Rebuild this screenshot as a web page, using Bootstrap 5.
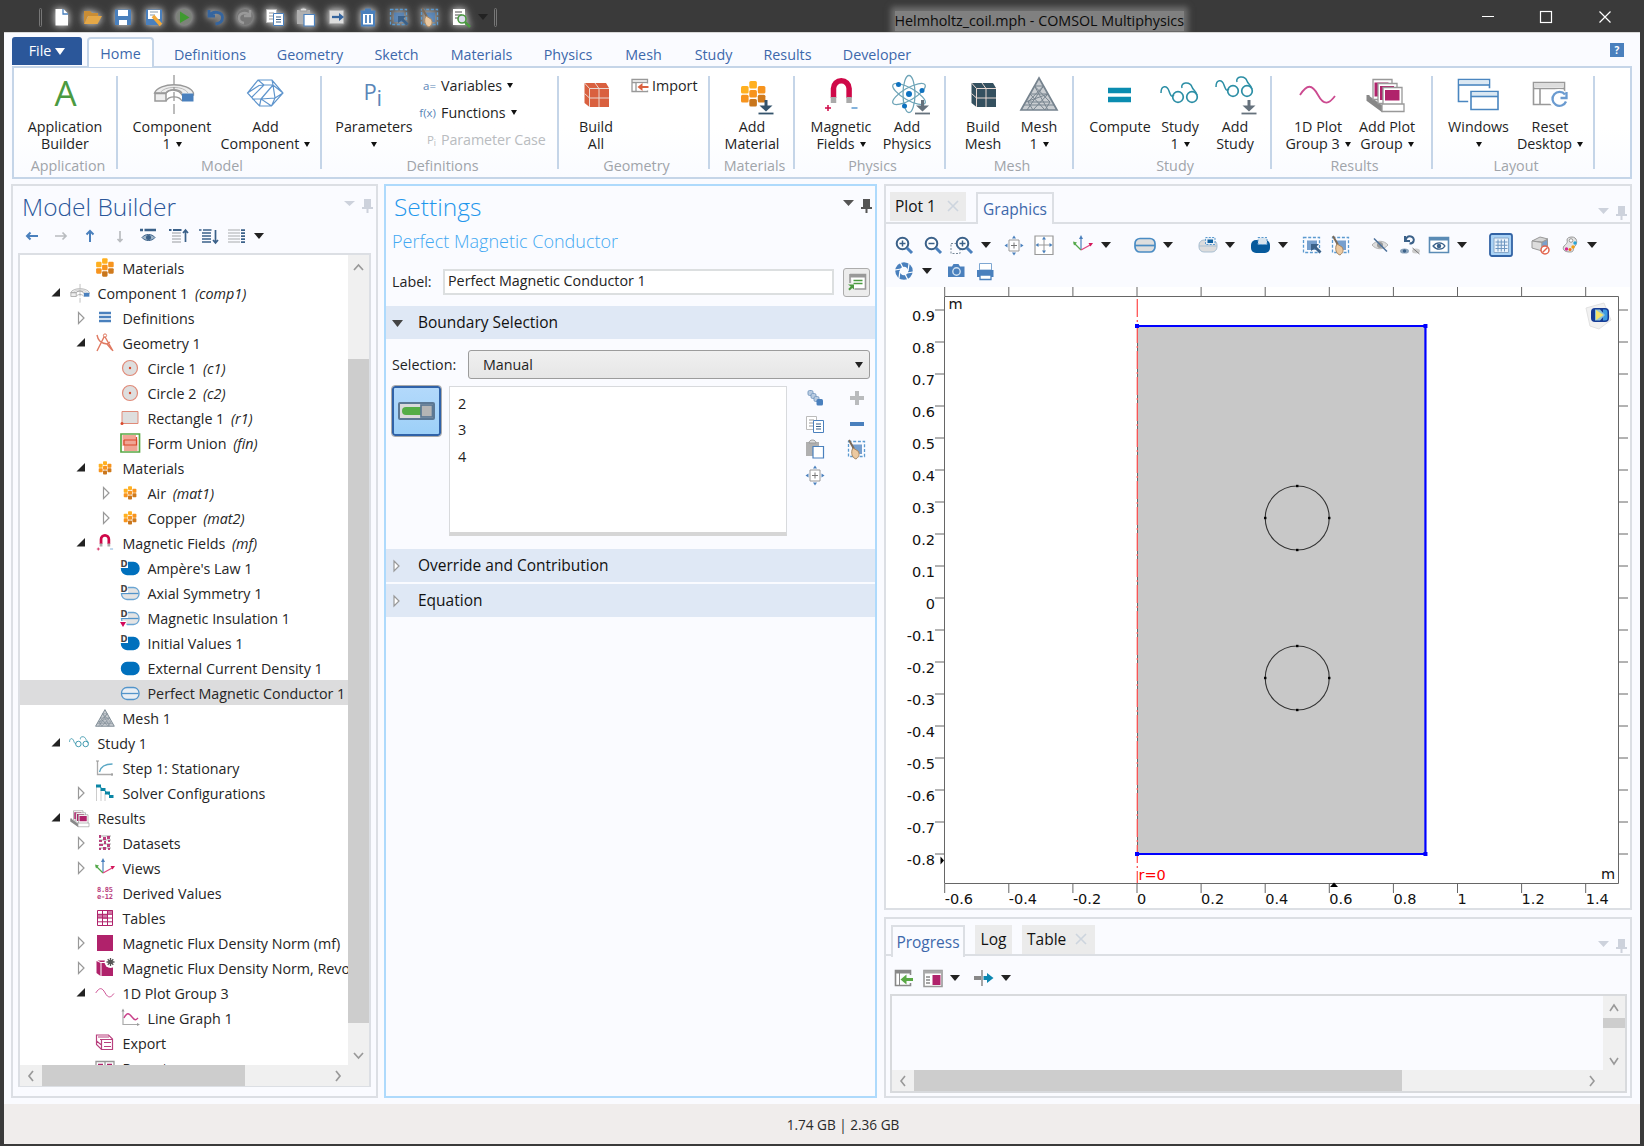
<!DOCTYPE html>
<html lang="en">
<head>
<meta charset="utf-8">
<title>Helmholtz_coil.mph - COMSOL Multiphysics</title>
<link rel="stylesheet" href="https://cdn.jsdelivr.net/npm/bootstrap@5.3.0/dist/css/bootstrap.min.css">
<style>
:root{--ui:"Open Sans","Noto Sans",sans-serif;--edge:#dcdfe4;--pane:#fafbff}
body{width:1644px;height:1146px;overflow:hidden;background:#3a3a3a;font-family:var(--ui);font-size:14.3px;line-height:1.2;color:#1f1f1f}
svg{display:block;flex:none;overflow:visible}
.titlebar{height:32px;overflow:hidden}
.glow{filter:drop-shadow(0 0 3px rgba(255,255,255,.6)) drop-shadow(0 0 5px rgba(255,255,255,.4))}
.tb-sep{width:3px;height:19px;border:1px solid #777;border-radius:2px}
.doc-title{margin-left:398px;color:#0c0c0c;background:#808080;box-shadow:0 0 6px 4px #707070;height:20px;line-height:20px;margin-top:11px}
.shell{margin:0 4px 2px;width:1636px;height:1112px;background:var(--pane);border-top:1px solid #d8d8d8}
.tabs{height:33px;padding-left:8px}
.file-tab{width:70px;height:28px;margin-top:4px;background:#2b579a;color:#fff;border-radius:3px 3px 0 0}
.tab{color:#3d68ab}
.home-tab{width:67px;height:30px;margin:4px 0 0 5px;border:2px solid #c5d5e8;border-bottom:0;border-radius:4px 4px 0 0;background:#fff;position:relative;z-index:2;margin-bottom:-2px;color:#3d68ab;padding-top:6px;text-align:center}
.tabset{padding-top:13px}
.help{width:14px;height:14px;background:#4a80bd;color:#fff;font-size:10px;font-weight:700;margin:10px 16px 0 0}
.ribbon{height:113px;margin:0 8px;border:2px solid #c5d5e8;background:linear-gradient(#fff 55%,#fafbff)}
.rgroup{position:relative;height:109px}
.rgroup::after{content:"";position:absolute;right:0;top:8px;height:93px;width:2px;background:#c5d5e8}
.rname{position:absolute;left:4px;right:0;bottom:3px;text-align:center;color:#a0a4aa}
.rbtn{flex:none;text-align:center;line-height:16.6px;white-space:nowrap;padding-top:5px}
.rbtn svg{margin:0 auto;height:44px;margin-bottom:2px}
.caret{display:inline-block;border:3px solid transparent;border-top:5px solid #111;border-bottom:0;vertical-align:2px;margin-left:5px}
.caret.lone{margin-left:0}
.bigcaret{display:block;border:5px solid transparent;border-top:6px solid #222;border-bottom:0;width:0;height:0;flex:none}
.rsmall{height:27px}
.rsmall i{font-style:normal;color:#5b86b8;font-size:11.5px;text-align:right;width:19px;margin-right:5px}
.rsmall.off,.rsmall.off i{color:#b9bcc0}
.work{padding:5px 8px 0 7px;gap:6px;height:919px}
.pane{border:2px solid var(--edge);background:var(--pane)}
.ptitle{font-weight:300;font-size:24.5px;line-height:30px;color:#2b579a}
.tree-box{width:353px;height:834px;border:2px solid var(--edge);margin-left:5px;background:#fff}
.tree{width:328px;height:810px;overflow:hidden}
.trow{height:25px;white-space:nowrap}
.trow span{padding-top:2px;margin-left:8px;color:#252525}
.trow em{margin-left:3px}
.trow.sel{background:#dcdcdd}
.sbar{background:#f0f0f0}
.thumb{background:#cdcdcd}
.section{height:33px;background:#dfe8f5;font-size:15.5px;color:#111;padding-left:7px}
.fld{height:26px;border:2px solid #dcdfe0;background:#fff;padding-left:3px;line-height:20px;color:#222}
.gbtn{width:27px;height:29px;border:1.5px solid #adadad;border-radius:3px;background:#ececec}
.combo{width:402px;height:29px;border:1.5px solid #9c9c9c;border-radius:3px;background:linear-gradient(#f0f0f0,#e6e6e6);padding:0 6px 0 14px}
.toggle{width:49px;height:50px;border:2px solid #2f62a8;outline:1px solid #aaa;border-radius:3px;background:linear-gradient(#b3d9fb,#9dd0f8)}
.slist{width:338px;height:150px;border:1.5px solid #d8dadd;border-bottom:4px solid #d6d6d6;background:#fff;padding:4px 8px;line-height:26.3px;font-size:14.5px}
.wtab{height:29px;background:#ebebeb;font-size:15.5px;color:#111}
.wtab.on{height:32px;background:var(--pane);border:2px solid var(--edge);border-bottom:0;color:#3d68ab;margin-bottom:-2px;position:relative;z-index:1;padding-top:1px}
.strip{border-bottom:2px solid var(--edge)}
.status{height:40px;background:#f0edec;color:#2a2a2a;font-size:13.6px;padding:2px 0 0 42px}
.axis{font-family:"DejaVu Sans",sans-serif;font-size:14.5px}
</style>
<script src="https://cdn.jsdelivr.net/npm/bootstrap@5.3.0/dist/js/bootstrap.bundle.min.js"></script>
</head>
<body class="d-flex flex-column">

<header class="titlebar d-flex">
  <div id="quick" class="d-flex align-items-center" style="padding-top:2px"></div>
  <div class="doc-title">Helmholtz_coil.mph - COMSOL Multiphysics</div>
  <svg class="ms-auto" width="180" height="32" fill="none" stroke="#fff" stroke-width="1.2"><path d="M18 16.500h12M135.500 11.500l11 11m0-11l-11 11"/><rect x="76.500" y="11.500" width="11" height="11"/></svg>
</header>

<main class="shell d-flex flex-column">
  <nav class="tabs d-flex">
    <div class="file-tab d-flex align-items-center justify-content-center">File<svg width="10" height="8" class="ms-1"><path d="M0 1h10l-5 7z" fill="#fff"/></svg></div>
    <div class="home-tab">Home</div>
    <div class="tabset d-flex" id="tabset"></div>
    <div class="help ms-auto d-flex align-items-center justify-content-center">?</div>
  </nav>
  <section class="ribbon d-flex" id="ribbon"></section>

  <div class="work d-flex">
    <!-- model tree -->
    <section class="pane d-flex flex-column" style="width:367px">
      <div class="d-flex justify-content-between" style="height:36px;padding:6px 4px 0 9px">
        <div class="ptitle">Model Builder</div>
        <svg width="28" height="16" class="mt-1" fill="#cdd2dc"><path d="M0 5h11l-5.500 5zM20 3h7v8h2v2h-4.500v4h-2v-4h-4.500v-2h2z"/></svg>
      </div>
      <div id="treebar" class="d-flex align-items-center" style="height:31px;padding-bottom:3px"></div>
      <div class="tree-box d-flex flex-column">
        <div class="d-flex">
          <div class="tree" id="tree"></div>
          <div class="sbar d-flex flex-column align-items-center justify-content-between" style="width:21px;height:810px">
            <svg width="21" height="104"><path d="M6 15l4.500-5 4.500 5" fill="none" stroke="#999" stroke-width="1.7"/></svg>
            <div class="thumb w-100 flex-grow-1"></div>
            <svg width="21" height="42"><path d="M6 30l4.500 5 4.500-5" fill="none" stroke="#999" stroke-width="1.7"/></svg>
          </div>
        </div>
        <div class="sbar d-flex" style="height:21px">
          <svg width="22" height="21"><path d="M13 6l-4 5 4 5" fill="none" stroke="#999" stroke-width="1.7"/></svg>
          <div class="thumb" style="width:203px"></div>
          <svg width="100" height="21"><path d="M91 6l4 5-4 5" fill="none" stroke="#999" stroke-width="1.7"/></svg>
        </div>
      </div>
    </section>

    <!-- node settings -->
    <section class="pane" style="width:493px;border-color:#aedafc">
      <div class="d-flex justify-content-between" style="height:40px;padding:6px 4px 0 8px">
        <div class="ptitle" style="color:#1f97ec">Settings</div>
        <svg width="28" height="16" class="mt-1" fill="#555"><path d="M0 4h11l-5.500 6zM20 3h7v8h2v2h-4.500v4h-2v-4h-4.500v-2h2z"/></svg>
      </div>
      <div style="height:42px;padding:5px 6px 0;font-size:18px;font-weight:300;color:#42a8f2">Perfect Magnetic Conductor</div>
      <div class="d-flex align-items-center" style="height:28px;padding-left:6px">
        <div style="width:51px">Label:</div><div class="fld" style="width:391px">Perfect Magnetic Conductor 1</div>
        <div class="gbtn d-flex align-items-center justify-content-center" style="margin-left:9px"><svg width="20" height="20"><path d="M3 2.500h15.500v14.500h-11M3 2v9" fill="#fff" stroke="#999" stroke-width="1.600"/><path d="M3 4h15" stroke="#999" stroke-width="3"/><path d="M6.500 8.500h9M6.500 11.500h9" stroke="#4b9a41" stroke-width="1.300"/><path d="M1 12.500h6v5l-1.800-1.500-2.500 2.500-1.500-1.500 2.500-2.500z" fill="#4b9a41"/></svg></div>
      </div>
      <div class="section d-flex align-items-center" style="margin-top:10px"><svg width="10" height="8" style="margin-right:15px"><path d="M-1 1h11l-5.500 7z" fill="#444"/></svg>Boundary Selection</div>
      <div class="d-flex align-items-center" style="height:29px;margin-top:11px;padding-left:6px">
        <div style="width:76px">Selection:</div>
        <div class="combo d-flex align-items-center justify-content-between">Manual<span class="bigcaret" style="border-width:6px 4.500px 0"></span></div>
      </div>
      <div class="d-flex" style="margin-top:7px;padding-left:6px;height:163px">
        <div class="toggle d-flex align-items-center justify-content-center"><svg width="37" height="18"><rect x="1" y="1" width="35" height="16" rx="1" fill="#dadada" stroke="#5c7894" stroke-width="2"/><path d="M8 5h15v8H8a4 4 0 0 1 0-8z" fill="#55ad45"/><rect x="23" y="3" width="11.500" height="12" fill="#b5b5b5" stroke="#5c7894" stroke-width="1.700"/></svg></div>
        <div class="slist" style="margin-left:8px">2<br>3<br>4</div>
        <div id="selA" class="d-flex flex-column" style="margin:2px 0 0 18px"></div>
        <div id="selB" class="d-flex flex-column" style="margin:2px 0 0 22px"></div>
      </div>
      <div class="section d-flex align-items-center"><svg width="8" height="12" style="margin:0 16px 0 1px"><path d="M0 1l5 5-5 5z" fill="#fff" stroke="#999" stroke-width="1.200"/></svg>Override and Contribution</div>
      <div class="section d-flex align-items-center" style="margin-top:2px"><svg width="8" height="12" style="margin:0 16px 0 1px"><path d="M0 1l5 5-5 5z" fill="#fff" stroke="#999" stroke-width="1.200"/></svg>Equation</div>
    </section>

    <!-- graphics and messages -->
    <div class="d-flex flex-column" style="width:748px;gap:7px;margin-left:1px">
      <section class="pane" style="height:726px">
        <div class="strip d-flex" style="height:38px;padding:6px 0 0 4px">
          <div class="wtab d-flex align-items-center" style="width:76px;padding-left:5px">Plot 1<svg width="11" height="11" style="margin-left:12px"><path d="M0 0l10 10M10 0L0 10" stroke="#cdd5de" stroke-width="1.600"/></svg></div>
          <div class="wtab on d-flex align-items-center justify-content-center" style="width:78px;margin-left:10px">Graphics</div>
          <svg width="28" height="16" class="ms-auto" style="margin:12px 4px 0 0" fill="#cdd2dc"><path d="M0 4h11l-5.500 6zM20 2h7v8h2v2h-4.500v4h-2v-4h-4.500v-2h2z"/></svg>
        </div>
        <div id="gbar1" class="d-flex align-items-center" style="height:41px"></div>
        <div id="gbar2" class="d-flex align-items-start" style="height:22px"></div>
        <svg id="plot" width="744" height="621" viewBox="0 0 744 621" style="background:#fff;overflow:hidden" class="axis"></svg>
      </section>
      <section class="pane" style="height:181px">
        <div class="strip d-flex" style="height:37px;padding:6px 0 0 5px">
          <div class="wtab on d-flex align-items-center justify-content-center" style="width:74px">Progress</div>
          <div class="wtab d-flex align-items-center justify-content-center" style="width:37px;margin-left:10px">Log</div>
          <div class="wtab d-flex align-items-center" style="width:73px;margin-left:10px;padding-left:5px">Table<svg width="11" height="11" style="margin-left:10px"><path d="M0 0l10 10M10 0L0 10" stroke="#cdd5de" stroke-width="1.600"/></svg></div>
          <svg width="28" height="16" class="ms-auto" style="margin:12px 4px 0 0" fill="#cdd2dc"><path d="M0 4h11l-5.500 6zM20 2h7v8h2v2h-4.500v4h-2v-4h-4.500v-2h2z"/></svg>
        </div>
        <div id="mbar" class="d-flex align-items-center" style="height:38px;padding-top:5px"></div>
        <div class="d-flex flex-column" style="width:737px;height:99px;margin-left:4px;border:2px solid #d8dadd">
          <div class="d-flex justify-content-end" style="height:74px">
            <div class="sbar d-flex flex-column" style="width:22px"><svg width="22" height="22"><path d="M7 15l4-6 4 6" fill="none" stroke="#999" stroke-width="1.600"/></svg><div class="thumb" style="height:10px"></div><svg width="22" height="42"><path d="M7 30l4 6 4-6" fill="none" stroke="#999" stroke-width="1.600"/></svg></div>
          </div>
          <div class="sbar d-flex" style="height:21px"><svg width="22" height="21"><path d="M13 6l-4 5 4 5" fill="none" stroke="#999" stroke-width="1.600"/></svg><div class="thumb" style="width:488px"></div><svg width="200" height="21"><path d="M188 6l4 5-4 5" fill="none" stroke="#999" stroke-width="1.600"/></svg></div>
        </div>
      </section>
    </div>
  </div>
  <footer class="status mt-auto d-flex align-items-center justify-content-center">1.74 GB | 2.36 GB</footer>
</main>

<script>
const $ = id => document.getElementById(id);
const svg = (w, h, inner, cls = '') => `<svg width="${w}" height="${h}" viewBox="0 0 ${w} ${h}" fill="none" class="${cls}">${inner}</svg>`;
const B = '#4a80bd', N = '#3b6189', G = '#b9bcc0', M = '#b0226b', T = '#2b8ea5';

/* shapes shared by the ribbon and the tree */
const cell = (x, y, c) => `<rect x="${x}" y="${y}" width="7.600" height="7.600" rx="1.500" fill="${c}"/>`;
const mats = cell(19.3,8,'#ffb020')+cell(11,13,'#ffb020')+cell(27.800,13,'#f7941e')+cell(19.300,17,'#f7941e')+cell(11,21.800,'#f7941e')+cell(27.800,21.800,'#d07a1c')+cell(19.300,26,'#c9761c');
const down = (x, y, c) => `<path d="M${x+7.500} ${y}v9" stroke="${c}" stroke-width="3"/><path d="M${x+1} ${y+5.500}h13l-6.500 6z" fill="${c}"/><path d="M${x} ${y+13.500}h15" stroke="${c}" stroke-width="1.800"/>`;
const cube = (x, c) => `<path d="M${x} 10h21.500l3 5V34H${x+5}l-5-4z" fill="${c}"/><path d="M${x} 10l5 5.500h19.500M${x+5} 15.500V34M${x+14.500} 34V15.500L${x+10.500} 10M${x+5} 25h19.500M${x} 20.500l5 4.500" stroke="#e9d8d2" stroke-width="1"/>`;
const magnet = `<path d="M14.500 25V15.500a7.800 7.800 0 0 1 15.600 0V25" stroke="#cf0848" stroke-width="5.500"/><path d="M14.500 24v6M30.100 24v6" stroke="#aaa" stroke-width="5.500"/><path d="M6 35h6M9 32v6" stroke="#cf0848" stroke-width="1.500"/><path d="M32.500 35h6" stroke="#5b9ad0" stroke-width="1.500"/>`;
const arch = `<path d="M4.500 20C9 9 39 9 43.500 20L43.500 22H32C29 16 19 16 16 20z" fill="#ededed" stroke="#999" stroke-width="1.300"/><path d="M10 20C14 12.500 34 12.500 38 20" stroke="#bbb"/><path d="M16 20C19 15.500 29 15.500 32 20M16 28C19 22.500 29 22.500 32 28" stroke="#999" stroke-width="1.300"/><rect x="5" y="20.500" width="11" height="7.500" fill="#eee" stroke="#999" stroke-width="1.500"/><path d="M32 20.500h11.500v8H32z" fill="${B}"/><path d="M24 2v9m0 3v2m0 3v9m0 3v10" stroke="#999" stroke-width="1.300"/>`;
const specs = `<path d="M3 20c0-8 6-8 8-2s3 6 5 4M24 15c-2-6 8-7 10-1 1 3 4 4 5 8" stroke="${T}" stroke-width="1.500"/><circle cx="20" cy="24" r="5.300" stroke="${T}" stroke-width="1.700"/><circle cx="34" cy="24" r="5.300" stroke="${T}" stroke-width="1.700"/>`;
const meshTri = `<path d="M22 5L40 37H4z" fill="#c9cdd1" stroke="#76838e" stroke-width="1.700"/><path d="M17.500 13h9L11 29h22zM13 21h18L8.500 29M31 21l-15 16M13 21l15 16M17.500 13L31 37M26.500 13L10 37M33 29l-5 8M11 29l5 8M7 32h30" stroke="#76838e" stroke-width="1"/>`;
const stack = `<path d="M3 22l15 11v5L3 27z" fill="#888"/><path d="M3 22v5l15 11" stroke="#888" stroke-width="3"/><g stroke="#999" stroke-width="1.300"><path d="M8 6.500h19v20H8z" fill="#fff"/><path d="M9.500 9.500h14v14h-14z" fill="${M}" stroke="none"/><path d="M13 10.500h19v20H13z" fill="#fff"/><path d="M15 13h14v14H15z" fill="${M}" stroke="none"/><path d="M18 14.500h19v20H18z" fill="#fff"/><path d="M20 17h14.500v10.500H20z" fill="${M}" stroke="none"/><path d="M17 31h22v7.500H17z" fill="#fff"/></g>`;
const sine = `<path d="M4 22c7-11 12-11 18 0s11 9 17 1" stroke="#cc4a90" stroke-width="1.800"/>`;
const crystal = `<path d="M14 7h14l11 13-11.500 13h-12L3.500 20zM14 7l6 5-12 12 M20 12h9l10 8M28 7l1 5-12 14 10.500 7M17 26H8M3.500 20L15 12.500 20 12M17 26l-1.500 7M29 12l2 13-3.500 8M31 25l-14 1M31 25l8-5" stroke="#5f95cd" stroke-width="1.200"/>`;
const atom = `<g stroke="#6fa5b8" stroke-width="1.300"><ellipse cx="24" cy="21" rx="6" ry="18.500"/><ellipse cx="24" cy="21" rx="6" ry="18.500" transform="rotate(60 24 21)"/><ellipse cx="24" cy="21" rx="6" ry="18.500" transform="rotate(-60 24 21)"/></g><g fill="#0f72c0"><circle cx="24" cy="21" r="3"/><circle cx="13.500" cy="11.500" r="2.500"/><circle cx="37" cy="17.500" r="2.500"/><circle cx="19.500" cy="33" r="2.500"/></g>`;
const big = {
  A: `<text x="22.500" y="33" font-size="35" fill="#4b9a41" text-anchor="middle">A</text>`,
  comp: arch, crystal,
  pi: `<text x="11.500" y="27" font-size="22" fill="#5b86b8">P</text><text x="24.500" y="33" font-size="22" fill="#5b86b8">i</text>`,
  cubeR: cube(10.500, '#d9603f'), cubeB: cube(10.500, '#34505f'),
  mat: mats + down(28.500, 27, '#34536b'), magnet,
  atom: atom + down(30, 27, '#65717c'), tri: meshTri,
  eq: `<path d="M10 17.500h23M10 26.500h23" stroke="#0b8cb0" stroke-width="5.500"/>`,
  specs, specs2: `<g transform="translate(0,-6)">${specs}</g>` + down(28.500, 27, '#65717c'), sine, stack,
  wins: `<g stroke="#4a86c0" stroke-width="1.600"><path d="M1.500 6.500h31v22h-31z" fill="#fff"/><path d="M2 7.500h30v4H2z" fill="#dbe8f3" stroke="none"/><path d="M1.500 12h31"/><path d="M12 16h32v22H12z" fill="#fff" stroke="#fff"/><path d="M14 18.500h27v18H14z" fill="#fff"/><path d="M15 19.500h25v3.500H15z" fill="#dbe8f3" stroke="none"/><path d="M14 23.500h27"/></g>`,
  reset: `<path d="M5.500 9.500h31v22h-31zM5.500 15.500h31M12 16v15" fill="#fff" stroke="#999" stroke-width="1.600"/><path d="M6 10h30v4H6z" fill="#ddd"/><circle cx="31" cy="26" r="10" fill="#fff"/><path d="M37 21.500a7 7 0 1 0 1 7M38.500 19v6h-6" stroke="#6b9bd0" stroke-width="2.300"/>`
};

/* ribbon tabs: label and width of its slot */
$('tabset').innerHTML = [['Definitions',112],['Geometry',88],['Sketch',85],['Materials',85],['Physics',88],['Mesh',63],['Study',77],['Results',71],['Developer',108]]
  .map(([t, w]) => `<div class="tab text-center" style="width:${w}px">${t}</div>`).join('');

/* ribbon groups: name, width, left padding, buttons [icon, width, line 1, line 2] */
const c = '<span class="caret"></span>';
const small = (i, t, car, off) => `<div class="rsmall d-flex align-items-center ${off ? 'off' : ''}"><i>${i}</i>${t}${car ? c : ''}</div>`;
const impIcon = svg(18, 16, `<path d="M1 1.500h15.500v12H1zM1 4.500h15M5 5v8" stroke="#999" stroke-width="1.300" fill="#fff"/><path d="M6 5.500h12v7H6z" fill="#fff"/><path d="M17.500 9h-8" stroke="#d9603f" stroke-width="2"/><path d="M6.500 9l5-4v8z" fill="#d9603f"/>`);
const groups = [
 ['Application',104,0,[['A',102,'Application','Builder']]],
 ['Model',204,7,[['comp',94,'Component','1'+c],['crystal',93,'Add','Component'+c]]],
 ['Definitions',237,6,[['pi',92,'Parameters','<span class="caret lone"></span>']], `<div style="padding-top:4px;margin-left:-3px">${small('a=','Variables',1)}${small('f(x)','Functions',1)}${small('P<sub>i</sub>','<span style="letter-spacing:-.1px">Parameter Case</span>',0,1)}</div>`],
 ['Geometry',151,6,[['cubeR',62,'Build','All']], `<div class="d-flex align-items-center" style="height:27px;margin:4px 0 0 4px">${impIcon}<span style="margin-left:3px">Import</span></div>`],
 ['Materials',85,2,[['mat',80,'Add','Material']]],
 ['Physics',151,9,[['magnet',74,'Magnetic','Fields'+c],['atom',58,'Add','Physics']]],
 ['Mesh',128,6,[['cubeB',62,'Build','Mesh'],['tri',50,'Mesh','1'+c]]],
 ['Study',198,12,[['eq',68,'Compute',''],['specs',52,'Study','1'+c],['specs2',58,'Add','Study']]],
 ['Results',161,8,[['sine',76,'1D Plot','Group 3'+c],['stack',62,'Add Plot','Group'+c]]],
 ['Layout',162,12,[['wins',67,'Windows','<span class="caret lone"></span>'],['reset',76,'Reset','Desktop'+c]]]
];
$('ribbon').innerHTML = groups.map(([n, w, p, bs, extra]) => `<div class="rgroup d-flex align-items-start" style="width:${w}px;padding-left:${p}px">` +
  bs.map(([i, bw, a, b]) => `<div class="rbtn" style="width:${bw}px">${svg(44, 44, big[i])}${a}<br>${b}</div>`).join('') + (extra || '') + `<div class="rname">${n}</div></div>`).join('');

/* 20px icons */
const sc = (s, inner, dx = 0, dy = 0) => `<g transform="translate(${dx},${dy}) scale(${s})">${inner}</g>`;
const pill = (f, st) => `<rect x="1.500" y="4.500" width="17.500" height="12" rx="5.500" fill="${f}" stroke="${st}" stroke-width="1.300"/>`;
const D = `<path d="M0 1.500h8v8.500H0z" fill="#fff"/><text x=".5" y="8.500" font-size="8.500" font-weight="700" font-family="DejaVu Sans,sans-serif" fill="#444">D</text>`;
const axes3 = `<path d="M8 15V2" stroke="${B}" stroke-width="1.200"/><path d="M6 4l2-4 2 4z" fill="${B}"/><path d="M8 15l-7-7" stroke="#53a849" stroke-width="1.300"/><path d="M0 6.500l4 1-3 3z" fill="#53a849"/><path d="M8 15l10-5.500" stroke="#e0457f" stroke-width="1.300"/><path d="M20 8l-4.500 0 2 3.500z" fill="#d3185b"/>`;
const dashBox = `<rect x="1.500" y="2.500" width="16" height="15" stroke="#5b9ad0" stroke-width="1.300" stroke-dasharray="3 1.700"/><rect x="5" y="5.500" width="10" height="9.500" fill="${B}" opacity=".75"/>`;
const broom = `<path d="M2 1l5 9" stroke="#7b6a58" stroke-width="2"/><path d="M6 9l5 3c2 3 1 6-2 8-3-1-5-4-4-9z" fill="#ecc9a0" stroke="#a88762"/>`;
const lens = `<circle cx="8.500" cy="8.500" r="5.800" fill="#fff" stroke="${N}" stroke-width="2"/><path d="M13 13l5 5" stroke="${B}" stroke-width="3"/>`;
const eye = `<path d="M3 10c4-5 11-5 14 0-3 5-10 5-14 0z" fill="#fff" stroke="${N}" stroke-width="1.500"/><circle cx="10" cy="10" r="2.600" fill="${N}"/>`;
const copy = `<path d="M1.500 2.500h10v13h-10z" fill="#fff" stroke="#bbb"/><path d="M4 6h5M4 9h5M4 12h5" stroke="#999"/><path d="M8.500 6.500h10v12h-10z" fill="#fff" stroke="${B}"/><path d="M11 10h5M11 12.500h5M11 15h5" stroke="${N}" stroke-width="1.200"/>`;
const paste = c2 => `<path d="M1 3h13v14H1z" fill="#b0b0b0"/><path d="M4 4c0-4 7-4 7 0z" fill="#ddd" stroke="#999"/><path d="M8 7.500h10.500v11.500H8z" fill="#fff" stroke="${c2}" stroke-width="1.200"/>`;
const ext = `<path d="M5 5h10v11H5z" fill="#fff" stroke="#999"/><path d="M10 7.500v6M7 10.500h6" stroke="#777"/><path d="M8 3.500l2-3 2 3zM8 17.500l2 3 2-3zM3.500 8.500l-3 2 3 2zM16.500 8.500l3 2-3 2z" fill="${B}"/>`;
const gridP = `<g stroke="${M}"><path d="M2.500 2.500h15v15h-15zM2.500 6.300h15M2.500 10h15M2.500 13.800h15M7.500 2v16M12.500 2v16" stroke-width="1"/></g><path d="M12 2h6v4h-6zM7 6h6v5H7zM2 6h5v4H2z" fill="${M}" opacity=".6"/>`;
const lines = (x, cl) => `<path d="M${x} 4h12M${x} 7h12M${x} 10h12M${x} 13h12M${x} 16h12" stroke="${cl}" stroke-width="1.500"/>`;
const I = {
  mats: sc(.72, mats, -6.8, -5.5), matsS: sc(.52, mats, -2, -1), comp: sc(.48, arch, -1.5, 0),
  defs: `<path d="M4 5h12M4 9h12M4 13h12" stroke="${B}" stroke-width="2.400"/>`,
  geom: `<path d="M2 2c1 5 3 8 10 9l5 6M2 18L9.500 3l8.500 15M12 11l3-2" stroke="#e07a62" stroke-width="1.400"/><circle cx="10" cy="2.500" r="1.600" stroke="#e07a62" fill="#fff"/>`,
  circ: `<circle cx="10" cy="10" r="7.500" fill="#dedede" stroke="#e08a78" stroke-width="1.200"/><circle cx="10" cy="10" r="1.200" fill="#d9482b"/>`,
  rect: `<path d="M2 3.500h16v12H2z" fill="#dedede" stroke="#e08a78"/><circle cx="2" cy="15.500" r="1.500" fill="#d9482b"/>`,
  union: `<path d="M1 1h18.500v18H1z" fill="#fff" stroke="#5aa845" stroke-width="1.700"/><path d="M2.500 2h13.500v4.500h1.500V18H4v-5H2.500z" fill="#f0a594"/><path d="M4 7h12.500v-3M4 7v5M16.500 7v5H4" stroke="#d9482b" stroke-width="1.200"/>`,
  magnet: sc(.5, magnet, -1.2, -1.5),
  dom: pill('#0070bd', '#0070bd') + D, bnd: pill('#e4e4e4','#6aa5d3') + `<path d="M1.500 10.500h17" stroke="#5294ca" stroke-width="1.300"/>` + D,
  ins: pill('#e4e4e4','#6aa5d3') + `<path d="M1.500 10.500h17" stroke="#5294ca" stroke-width="1.300"/>` + D + `<path d="M-.500 13h7v6h-7z" fill="#fff"/><path d="M0 14h6l-3 5z" fill="#d3085b"/>`,
  domP: pill('#0070bd','#0070bd'), bndP: pill('#e8eef4','#5294ca') + `<path d="M1.500 10.500h17" stroke="#5294ca" stroke-width="1.300"/>`,
  mesh: sc(.52, meshTri, -1.5, -1), study: sc(.52, specs, -2, -1.5),
  step: `<path d="M2.500 3v13.500H18" stroke="#aaa" stroke-width="1.300"/><path d="M1 3h3M17 15v3" stroke="#999"/><path d="M4.500 14c1-5 4-8 13-8" stroke="#5ba8c5" stroke-width="1.300"/>`,
  solv: `<path d="M1.500 4v14M6 7v11M10 10v8" stroke="#ccc"/><path d="M1 1.500h5v3H1zM5.500 5h5v3h-5zM10 8.500h5v3h-5zM14 12h4.500v3H14z" fill="#0b86a5"/><path d="M4 3l13 11" stroke="#0b86a5"/>`,
  results: sc(.5, stack, -.5, -.5),
  data: `<g fill="#aaa"><path d="M4 2h12v2H4zM4 6h12v2H4zM4 10h12v2H4zM4 14h12v2H4z" opacity=".5"/></g><path d="M4 2h2v3H4zM8 4h3v3H8zM12 3h3v3h-3zM4 7h3v2H4zM9 8h2v3H9zM13 7h2v2h-2zM4 11h4v2H4zM12 11h3v3h-3zM8 14h3v3H8zM13 15h2v2h-2zM4 15h2v2H4z" fill="${M}" opacity=".85"/>`,
  views: axes3,
  der: `<text x="2" y="8.500" font-size="7" font-weight="700" font-family="DejaVu Sans Mono,monospace" fill="#b9407e" textLength="16">8.85</text><text x="2" y="16" font-size="7" font-weight="700" font-family="DejaVu Sans Mono,monospace" fill="#b9407e" textLength="16">e-12</text>`,
  tab: gridP, sq: `<path d="M2 2h16v16H2z" fill="${M}"/>`,
  rev: `<path d="M1.500 3l4 2v13l-4-3zM6.500 5H18v13H6.500zM2.500 2.500h10V4h-7z" fill="${M}"/><circle cx="15.500" cy="4" r="6" fill="#fff"/><path d="M15.500 0v8M11.500 4h8M12.700 1.200l5.600 5.600M18.300 1.200l-5.600 5.600" stroke="#555" stroke-width="1.300"/><circle cx="15.500" cy="4" r="2.200" fill="#555"/>`,
  sine: sc(.52, sine, -1.300, -1.500),
  lineg: `<path d="M3 2v14.500h15.500" stroke="#aaa" stroke-width="1.200"/><path d="M1.500 3.500L3 .500l1.500 3zM17 15l3 1.500-3 1.500z" fill="#999"/><path d="M4 10c3-6 5-5 8-1s4 3 6 1" stroke="#c9408a" stroke-width="1.400"/>`,
  exp: `<path d="M1.500 2h12l4 4v10.500h-11l-5-5zM3 4h11M5 6.500h12.500M6.500 7v9M9 9.500h7M9 13.500h7M1.500 8l5 4" stroke="#b9407e" stroke-width="1.200"/>`,
  rep: `<path d="M1 20V3.500h18V20M10 4v16" stroke="#999" stroke-width="1.300"/><path d="M3 6.500h5M12 6.500h5M3 9.500h5M12 9.500h5" stroke="${M}" stroke-width="1.500"/>`,
  zin: lens + `<path d="M5.500 8.500h6M8.500 5.500v6" stroke="${N}" stroke-width="1.500"/>`, zout: lens + `<path d="M5.500 8.500h6" stroke="${N}" stroke-width="1.500"/>`,
  zbox: `<path d="M-1 8.500h9v10h-9z" stroke="#789" stroke-dasharray="2 1.500"/><g transform="translate(2,0)">${lens}<path d="M5.500 8.500h6M8.500 5.500v6" stroke="${N}" stroke-width="1.500"/></g>`,
  ext, extall: `<path d="M1 1h18v18.500H1z" fill="#fff" stroke="#999" stroke-width="1.200"/><path d="M10 3v14M3 10h14" stroke="#999"/><path d="M8 4.500l2-3 2 3zM8 15.500l2 3 2-3zM4.500 8l-3 2 3 2zM15.500 8l3 2-3 2z" fill="${B}"/>`,
  selb: `<rect x="0" y="3.500" width="20" height="13.500" rx="5" fill="#dedede" stroke="#4a8cc4" stroke-width="1.700"/><path d="M0 10.500h20" stroke="#4a8cc4" stroke-width="1.700"/>`,
  hidb: `<rect x="1" y="5" width="18" height="12" rx="5" fill="#dcdcdc" stroke="#a9bfd2"/><path d="M1 11h18" stroke="#a9bfd2"/><path d="M7.500 2.500h9.500v7H7.500z" fill="#e8f0f7" stroke="#5b9ad0" stroke-dasharray="2 1.300"/><path d="M9.500 4.500h5.500v3.500H9.500z" fill="#0f5f9e"/>`,
  hidd: `<rect x="1" y="5" width="19" height="13" rx="5" fill="#075a9c"/><path d="M8 2.500h9v7H8z" fill="#d8e4ee" stroke="#5b9ad0" stroke-dasharray="2 1.500"/>`,
  sela: dashBox + `<path d="M9 9h8l-2.500 2.500 5 5-2 2-5-5L9 16z" fill="${N}"/>`, selc: dashBox + broom,
  noeye: `<path d="M2 10c4-5 12-5 16 0-4 5-12 5-16 0z" fill="#ddd" stroke="#b5b5b5"/><circle cx="10" cy="10" r="3" fill="#999"/><path d="M4 3.500l13 13" stroke="#4a6f99" stroke-width="1.500"/>`,
  reseye: `<path d="M5 1v5h5M5.500 5.500c2-7 10-4 8 1-.7 1.600-2 2-4 2" stroke="${N}" stroke-width="2"/><ellipse cx="4.500" cy="16" rx="4.500" ry="2.600" fill="#8da5bd"/><circle cx="4.500" cy="16" r="1.700" fill="${N}"/><ellipse cx="16" cy="16" rx="4" ry="2.500" fill="#ccc"/><path d="M12.500 13l7 6" stroke="#777"/>`,
  eyewin: `<path d="M.500 2.500h19v15H.500z" fill="#fff" stroke="#5a8bb5" stroke-width="1.600"/><path d="M.500 4h19" stroke="#5a8bb5" stroke-width="3"/><g transform="translate(1.500,2.500) scale(.85)">${eye}</g>`,
  gridon: `<rect x="-1" y="-1" width="22" height="22" rx="2" fill="#a9d2f5" stroke="#3263a5" stroke-width="1.800"/><path d="M3 3h14.500v14.500H3z" fill="#eaf3fb" stroke="#8aa9c9"/><path d="M7 4.500v12M10.250 4.500v12M13.500 4.500v12M4.500 7h12M4.500 10.250h12M4.500 13.500h12" stroke="#6d95c0"/>`,
  box3: `<path d="M2 6l8-4 8 2-6 3z" fill="#d5d5d5" stroke="#999"/><path d="M2 6l10 1.500V16L2 13z" fill="#ddd" stroke="#999"/><path d="M12 7.500l5.500-3V13L12 16z" fill="#7aa0cc" stroke="#999"/><circle cx="15" cy="15" r="4" fill="#fff" stroke="#e2634c" stroke-width="1.500"/><path d="M12.500 17.500l5-5" stroke="#e2634c" stroke-width="1.500"/>`,
  palette: `<path d="M12 2c5 0 6 6 3 9s0 6-5 6c-6 0-8-3-6-6 2-2 4-3 3-6 0-2 2-3 5-3z" fill="#e4e4e4" stroke="#999"/><circle cx="11" cy="5.500" r="1.800" fill="#fff" stroke="#999"/><circle cx="15" cy="8" r="1.700" fill="#25a6d8"/><circle cx="13" cy="12" r="1.700" fill="#f5a010"/><circle cx="10" cy="14.500" r="1.500" fill="#f07018"/><circle cx="6.500" cy="14" r="1.700" fill="#d62890"/>`,
  shutter: `<circle cx="10" cy="10" r="6.500" stroke="${B}" stroke-width="4.500"/><path d="M6 1l3 6M15 3l-1 7M19 11l-6 1M14 19l-3-6M5 17l1-7M1 9l6-1" stroke="#fff" stroke-width="1.200"/>`,
  camera: `<path d="M2 5.500h4l1.500-2.500h5l1.500 2.500h4.500V16H2z" fill="${B}"/><circle cx="10.500" cy="10.500" r="3.700" stroke="#cfe0f0" stroke-width="1.400"/>`,
  printer: `<path d="M4.500 2.500h12V9h-12z" fill="#fff" stroke="#7ea7d2"/><path d="M2 9h16.500v7H2z" fill="${B}"/><path d="M5 14h11v4.500H5z" fill="#fff" stroke="${B}" stroke-width="1.300"/>`,
  left: `<path d="M5 10h11" stroke="${B}" stroke-width="2"/><path d="M8.500 6.500L5 10l3.500 3.500" stroke="${B}" stroke-width="2"/>`,
  right: `<path d="M4 10h11M11.500 6.500L15 10l-3.500 3.500" stroke="${G}" stroke-width="1.700"/>`,
  up: `<path d="M10 16V5M6.500 8.500L10 5l3.500 3.500" stroke="${B}" stroke-width="2"/>`,
  dn: `<path d="M10 5v11M7.500 13l2.500 2.500 2.500-2.500" stroke="${G}" stroke-width="1.700"/>`,
  show: `<path d="M2 4h3m1.500 0H18" stroke="${N}" stroke-width="2.400"/><g transform="translate(0,1.500)"><path d="M4 10c3-4 10-4 13 0-3 4-10 4-13 0z" fill="#9fb5c9" stroke="${N}"/><circle cx="10.500" cy="10" r="2.500" fill="${N}"/></g>`,
  coll: `<path d="M4 7h9M4 10h9M4 13h9M4 16h9" stroke="${G}" stroke-width="1.500"/><path d="M1 4h2.500m1.500 0h8.500" stroke="${N}" stroke-width="2"/><path d="M17.500 16V4M15 7l2.500-3L20 7" stroke="${N}" stroke-width="1.700"/>`,
  expd: `<path d="M4 7h9M4 10h9M4 13h9M4 16h9M1 4h2.500m1.500 0h8.500" stroke="${N}" stroke-width="1.500"/><path d="M17.500 4v13M15 14l2.500 3 2.500-3" stroke="${N}" stroke-width="1.700"/>`,
  cols: lines(1, '#c4c6c9') + `<path d="M16 3.250v14" stroke="${N}" stroke-width="4" stroke-dasharray="1.800 1.200"/>`,
  link: `<g fill="#b9cbe0" stroke="#7e9fc4"><rect x="3" y="2.500" width="5" height="5" rx="1.500"/><rect x="6" y="5.500" width="5" height="5" rx="1.500"/><rect x="9" y="8.500" width="5" height="5" rx="1.500"/></g><rect x="11.500" y="11" width="6.500" height="6.500" rx="1.500" fill="${B}"/>`,
  copy, paste: paste(B), plus: `<path d="M10 3v14M3 10h14" stroke="#b9bbbd" stroke-width="4"/>`, minus: `<path d="M3 10h14" stroke="${B}" stroke-width="4"/>`,
  new_: `<path d="M4.500 2h8l4.500 4.500V18.500H4.500z" fill="#fff"/><path d="M12 2v5h5" stroke="${B}" stroke-width="1.300"/>`,
  open: `<path d="M2 17V4h6l2 2h6v3H6z" fill="#c98d35"/><path d="M2 17l4.500-8H20l-4.500 8z" fill="#e5a847"/>`,
  save: `<path d="M2 2.500h16v15.500H2z" fill="#4a80bd"/><path d="M5 3h10v6H5zM6 13h8v5H6z" fill="#fff"/>`,
  saveas: `<path d="M2 2.500h16v15.500H2z" fill="#4a80bd"/><path d="M4 3h12v9H4z" fill="#fff"/><path d="M6 5h8M6 8h5" stroke="#89a"/><path d="M9 9l8 9" stroke="#f2a93a" stroke-width="3.500"/>`,
  run: `<circle cx="10" cy="10" r="8" fill="#7d837b"/><path d="M6 4.500l9.500 6L6 16z" fill="#3f9a2f"/>`,
  undo: `<path d="M4 3v6h6M4.500 8.500c3-5 13-4 13 2 0 4-3 6-7 6.500" stroke="#35659f" stroke-width="2.800"/>`,
  redo: `<circle cx="10" cy="10" r="8" fill="#777"/><path d="M15 3v6H9M15 9C11 4 4 6 4 11c0 3 2 4.500 5 5" stroke="#999" stroke-width="2.500"/>`,
  dup: `<path d="M2 3h15v14H2z" fill="#ddd" stroke="#888"/><path d="M5 10h8" stroke="#35659f" stroke-width="2.300"/><path d="M12 6l5 4-5 4z" fill="#35659f"/>`,
  trash: `<path d="M4 6h12v12.500H4z" fill="#fff" stroke="${B}" stroke-width="2"/><path d="M2.500 4.500h15M7 2.500h6M8 8v8M12 8v8" stroke="${B}" stroke-width="1.800"/>`,
  find: `<path d="M3 2h12v16H3z" fill="#fff"/><path d="M5 5h7M5 8h7M5 11h4" stroke="#888" stroke-width="1.300"/><circle cx="12" cy="12" r="4" fill="#dde" stroke="#4b9a41" stroke-width="1.600"/><path d="M15 15l5 5" stroke="#4b9a41" stroke-width="2.500"/>`,
  tback: `<path d="M1.500 2.500h15v15h-15z" fill="#fff" stroke="#888" stroke-width="1.600"/><path d="M1.500 4h15" stroke="#888" stroke-width="3"/><path d="M5.500 5v12" stroke="#888"/><path d="M7 7h13v8H7z" fill="#fafbff"/><path d="M19 11.500h-8" stroke="#5aa845" stroke-width="3"/><path d="M6.500 11.500l6-5v10z" fill="#5aa845"/>`,
  tplot: `<path d="M1 2.500h18v16H1z" fill="#fff" stroke="#999" stroke-width="1.600"/><path d="M1 4h18" stroke="#aaa" stroke-width="3"/><path d="M3 9h4M3 12h4M3 15h4" stroke="#888" stroke-width="1.300"/><path d="M9.500 7h8v10h-8z" fill="${M}"/>`,
  step2: `<path d="M0 10h7" stroke="#888" stroke-width="4"/><path d="M8 2v16" stroke="#888" stroke-width="1.500"/><path d="M9.500 10h5" stroke="#0b86b0" stroke-width="4"/><path d="M13 5l6.500 5-6.500 5z" fill="#0b86b0"/>`
};

/* lay a toolbar out in a row: each entry is [icon, centre measured from the bar's left edge] */
function bar(id, items, cls = '') {
  let x = 0;
  $(id).innerHTML = items.map(([k, cx]) => {
    const w = k === 'v' ? 10 : k === '|' ? 3 : 20, m = cx - w / 2 - x;
    x = cx + w / 2;
    const h = k === 'v' ? '<span class="bigcaret"></span>' : k === '|' ? '<span class="tb-sep d-block"></span>' : svg(20, 20, I[k], cls);
    return `<div class="d-flex align-items-center" style="margin-left:${m}px;height:20px">${h}</div>`;
  }).join('');
}
bar('quick', [['|',40.500],['new_',61],['open',92],['save',122.500],['saveas',153.500],['run',184],['undo',214.500],['redo',245],['copy',275],['paste',306],['dup',337],['trash',367.500],['sela',399],['selc',430],['find',460],['v',483],['|',495]], 'glow');
bar('treebar', [['left',18.500],['right',47.500],['up',77],['dn',107],['show',135],['coll',165],['expd',194.500],['cols',224],['v',245.500]]);
bar('gbar1', [['zin',18],['zout',47],['zbox',76],['v',99.500],['ext',128],['extall',158],['views',197],['v',220],['selb',259],['v',282],['hidb',321.500],['v',344],['hidd',373.500],['v',396.500],['sela',426],['selc',455],['noeye',494],['reseye',523.500],['eyewin',553],['v',576],['gridon',615],['box3',653.500],['palette',683.500],['v',705.500]]);
bar('gbar2', [['shutter',18],['v',41],['camera',70],['printer',99]]);
bar('mbar', [['tback',18],['tplot',47],['v',69],['step2',98],['v',120]]);
$('gbar2').style.marginTop = '-4px';
$('gbar2').style.height = '26px';
$('selA').innerHTML = ['link','copy','paste','ext'].map(k => `<div style="height:25.700px">${svg(20, 20, I[k])}</div>`).join('');
$('selB').innerHTML = ['plus','minus','selc'].map(k => `<div style="height:25.700px">${svg(20, 20, I[k])}</div>`).join('');

/* model tree: depth, state (o open, c closed), icon, label, tag */
const nodes = [[1,'','mats','Materials'],[0,'o','comp','Component 1','(comp1)'],[1,'c','defs','Definitions'],[1,'o','geom','Geometry 1'],[2,'','circ','Circle 1','(c1)'],[2,'','circ','Circle 2','(c2)'],[2,'','rect','Rectangle 1','(r1)'],[2,'','union','Form Union','(fin)'],[1,'o','matsS','Materials'],[2,'c','matsS','Air','(mat1)'],[2,'c','matsS','Copper','(mat2)'],[1,'o','magnet','Magnetic Fields','(mf)'],[2,'','dom',"Ampère's Law 1"],[2,'','bnd','Axial Symmetry 1'],[2,'','ins','Magnetic Insulation 1'],[2,'','dom','Initial Values 1'],[2,'','domP','External Current Density 1'],[2,'','bndP','Perfect Magnetic Conductor 1','',1],[1,'','mesh','Mesh 1'],[0,'o','study','Study 1'],[1,'','step','Step 1: Stationary'],[1,'c','solv','Solver Configurations'],[0,'o','results','Results'],[1,'c','data','Datasets'],[1,'c','views','Views'],[1,'','der','Derived Values'],[1,'','tab','Tables'],[1,'c','sq','Magnetic Flux Density Norm (mf)'],[1,'c','rev','Magnetic Flux Density Norm, Revo'],[1,'o','sine','1D Plot Group 3'],[2,'','lineg','Line Graph 1'],[1,'','exp','Export'],[1,'','rep','Reports']];
const arrow = { o: '<path d="M10 5v8.500H1.500z" fill="#222"/>', c: '<path d="M3.500 4.500v11l5.500-5.500z" fill="#fff" stroke="#999" stroke-width="1.200"/>', '': '' };
$('tree').innerHTML = nodes.map(([d, s, i, t, tag, sel]) => `<div class="trow d-flex align-items-center ${sel ? 'sel' : ''}" style="padding-left:${29.5 + d * 25}px">` +
  svg(20, 20, arrow[s]) + svg(20, 20, I[i]) + `<span>${t}${tag ? ` <em>${tag}</em>` : ''}</span></div>`).join('');

/* plot: r and z in metres to pixels */
const X = r => 251 + r * 320.500, Y = z => 311 - z * 320;
let p = `<path d="M58.500 9.500H732.500V596.500H58.500z" stroke="#666" fill="#fff"/>`, ticks = '', labels = '';
for (let i = -3; i <= 7; i++) {
  const r = i / 5, x = X(r);
  ticks += `M${x} 0V9M${x} 597v9`;
  labels += `<text x="${x}" y="617">${+r.toFixed(1)}</text>`;
}
for (let i = 9; i >= -8; i--) {
  const y = Y(i / 10);
  ticks += `M49 ${y}h9M733 ${y}h9`;
  labels += `<text x="49" y="${y + 11}" text-anchor="end">${+(i / 10).toFixed(1)}</text>`;
}
const x0 = X(0), x1 = X(.9), y0 = Y(.85), y1 = Y(-.8);
p += `<path d="${ticks}" stroke="#666"/><g fill="#111">${labels}<text x="62.500" y="22">m</text><text x="715" y="592">m</text></g>`;
p += `<path d="M${x0} ${y0}H${x1}V${y1}H${x0}z" fill="#c8c8c8"/><path d="M${x0 + .5} ${y0}V${y1}" stroke="#666"/><path d="M${x0 + .3} 12V596" stroke="#f55" stroke-width="1.300" stroke-dasharray="18 3 2 3"/>`;
p += `<path d="M${x0} ${y0}H${x1}V${y1}H${x0}" fill="none" stroke="#00f" stroke-width="2.200"/>`;
for (const [a, b] of [[x0, y0], [x1, y0], [x0, y1], [x1, y1]]) p += `<rect x="${a - 2}" y="${b - 2}" width="4" height="4" fill="#00f"/>`;
for (const z of [.25, -.25]) {
  const a = X(.5), b = Y(z);
  p += `<circle cx="${a}" cy="${b}" r="32" fill="none" stroke="#333" stroke-width="1.100"/>`;
  for (const [u, v] of [[32, 0], [-32, 0], [0, 32], [0, -32]]) p += `<rect x="${a + u - 1.2}" y="${b + v - 1.2}" width="2.400" height="2.400" fill="#000"/>`;
}
p += `<text x="252.500" y="593" fill="#f00">r=0</text><path d="M444 600h8l-4-4.500zM54.500 569.500v8l3.500-4z" fill="#000"/>`;
p += `<g><path d="M700 21l18-5 7 17-12 9-9-3z" fill="#f1f1f1" stroke="#e2e2e2"/><rect x="705" y="21" width="18" height="14" rx="4" fill="#163c95"/><path d="M717 22.500h2a2.500 2.500 0 0 1 2.500 2.500v6a2.500 2.500 0 0 1-2.500 2.500h-2z" fill="#3f9be0"/><path d="M709 22.500h5l5 5.500-5 5.500h-5z" fill="#8fc4d8"/><path d="M710 23l7.500 5-7.500 5z" fill="#f5e36a"/></g>`;
$('plot').innerHTML = p;
</script>
</body>
</html>
